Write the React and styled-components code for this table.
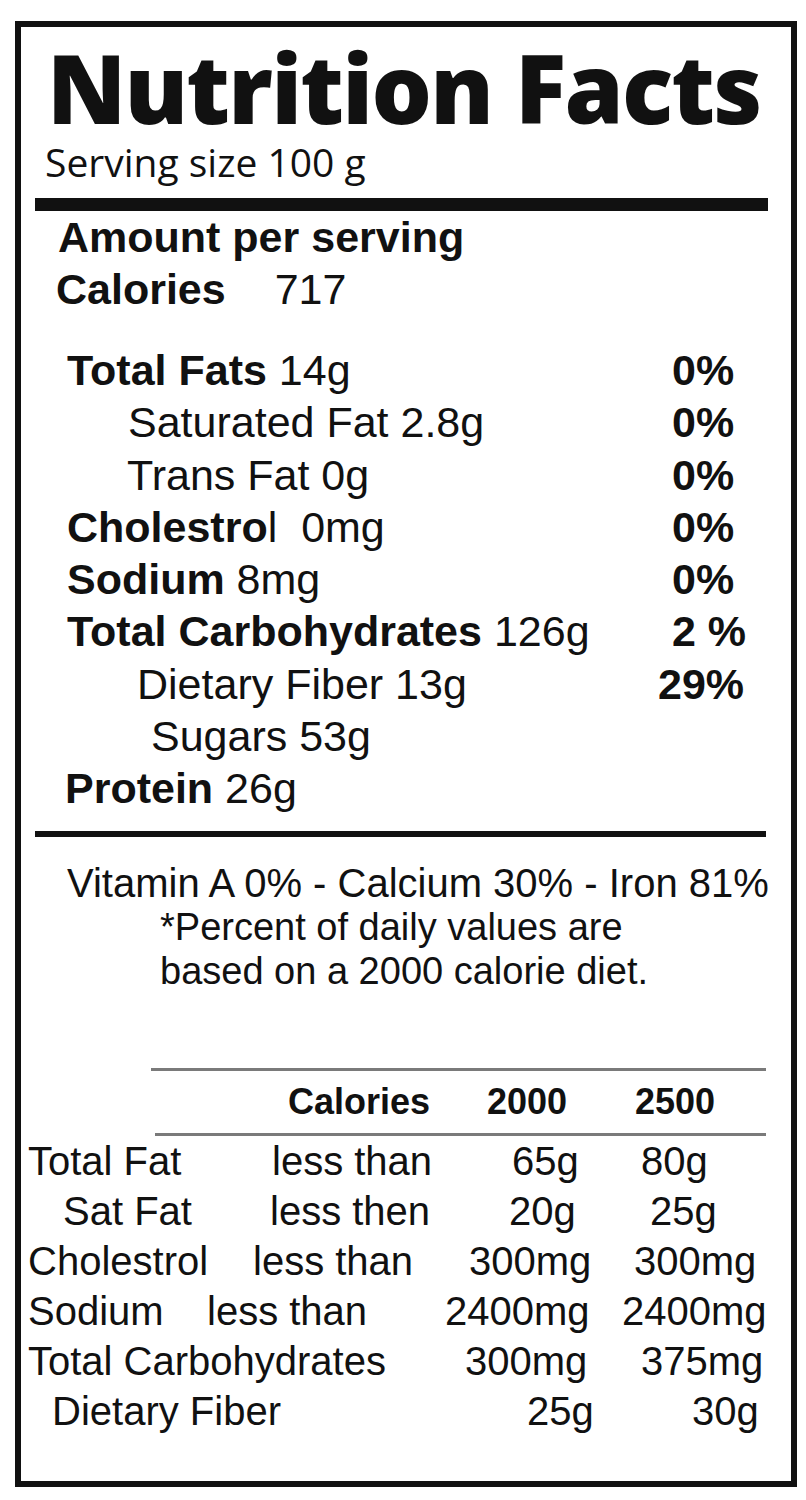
import styled, { createGlobalStyle, css } from "styled-components";

const GlobalStyle = createGlobalStyle`
  body {
    margin: 0;
    background: #ffffff;
    color: #111111;
    font-family: "Liberation Sans", Arial, sans-serif;
  }
`;

const Label = styled.div`
  box-sizing: border-box;
  width: 782px;
  height: 1466px;
  margin: 21px 0 0 15px;
  border: 6px solid #111111;
  display: flex;
  flex-direction: column;
`;

const Title = styled.h1`
  margin: 13px 0 0 26px;
  font-family: "Open Sans", sans-serif;
  font-weight: 800;
  font-size: 95px;
  line-height: 95px;
  letter-spacing: -1.75px;
`;

const Serving = styled.div`
  margin: 7px 0 0 24px;
  font-family: "Open Sans", sans-serif;
  font-size: 39px;
  line-height: 39px;
`;

const Rule = styled.div`
  height: ${(p) => p.size}px;
  margin: ${(p) => p.gap}px ${(p) => p.right}px 0 ${(p) => p.left}px;
  background: ${(p) => (p.gray ? "#7a7a7a" : "#111111")};
`;

const Line = styled.div`
  font-size: 43px;
  line-height: 52px;
  font-weight: ${(p) => (p.bold ? 700 : 400)};
  padding-left: ${(p) => p.indent}px;
  margin-top: ${(p) => p.gap || 0}px;
`;

const Kcal = styled.span`
  font-weight: 400;
  margin-left: 49px;
`;

const Nutrients = styled.div`
  margin-top: 29px;
  display: flex;
  flex-direction: column;
`;

const Nutrient = styled.div`
  display: grid;
  grid-template-columns: 1fr 119px;
  font-size: 43px;
  line-height: 52.25px;
  padding-left: ${(p) => 46 + (p.indent || 0)}px;
  b {
    font-weight: 700;
  }
`;

const Daily = styled.span`
  font-weight: 700;
  margin-left: ${(p) => p.nudge || 0}px;
`;

const Note = styled.div`
  font-size: ${(p) => p.size || 40}px;
  line-height: 44px;
  padding-left: ${(p) => p.indent}px;
  margin-top: ${(p) => p.gap || 0}px;
`;

const Table = styled.div`
  padding-left: 7px;
  display: flex;
  flex-direction: column;
`;

const TableRow = styled.div`
  display: grid;
  grid-template-columns: 172px 240px 175px 1fr;
  white-space: nowrap;
  ${(p) =>
    p.head
      ? css`
          font-size: 36px;
          line-height: 40px;
          font-weight: 700;
          margin: 11px 0;
        `
      : css`
          font-size: 40px;
          line-height: 50px;
        `}
`;

const Cell = styled.span`
  padding-left: ${(p) => p.pad || 0}px;
  ${(p) =>
    p.span &&
    css`
      grid-column: span ${p.span};
    `}
`;

const nutrients = [
  { indent: 0, bold: "Total Fats", rest: " 14g", dv: "0%" },
  { indent: 61, rest: "Saturated Fat 2.8g", dv: "0%" },
  { indent: 60, rest: "Trans Fat 0g", dv: "0%" },
  { indent: 0, bold: "Cholestro", rest: "l\u00a0 0mg", dv: "0%" },
  { indent: 0, bold: "Sodium", rest: " 8mg", dv: "0%" },
  { indent: 0, bold: "Total Carbohydrates", rest: " 126g", dv: "2 %" },
  { indent: 70, rest: "Dietary Fiber 13g", dv: "29%", nudge: -14 },
  { indent: 84, rest: "Sugars 53g" },
  { indent: -2, bold: "Protein", rest: " 26g" },
];

const limits = [
  ["Total Fat", 0, "less than", 72, "65g", 72, "80g", 26],
  ["Sat Fat", 35, "less then", 70, "20g", 69, "25g", 35],
  ["Cholestrol", 0, "less than", 53, "300mg", 29, "300mg", 19],
  ["Sodium", 0, "less than", 7, "2400mg", 5, "2400mg", 7],
];

function App() {
  return (
    <>
      <GlobalStyle />
      <Label>
        <Title>Nutrition Facts</Title>
        <Serving>Serving size 100 g</Serving>
        <Rule size={13} gap={17} left={14} right={23} />

        <Line bold indent={37}>
          Amount per serving
        </Line>
        <Line bold indent={35}>
          Calories<Kcal>717</Kcal>
        </Line>

        <Nutrients>
          {nutrients.map((n, i) => (
            <Nutrient key={i} indent={n.indent}>
              <span>
                {n.bold && <b>{n.bold}</b>}
                {n.rest}
              </span>
              {n.dv && <Daily nudge={n.nudge}>{n.dv}</Daily>}
            </Nutrient>
          ))}
        </Nutrients>

        <Rule size={6} gap={17} left={14} right={25} />

        <Note indent={46} gap={24}>
          Vitamin A 0% - Calcium 30% - Iron 81%
        </Note>
        <Note indent={139} size={38}>
          *Percent of daily values are
        </Note>
        <Note indent={139} size={38}>
          based on a 2000 calorie diet.
        </Note>

        <Rule gray size={3} gap={75} left={130} right={25} />
        <Table>
          <TableRow head>
            <span />
            <Cell pad={88}>Calories</Cell>
            <Cell pad={47}>2000</Cell>
            <Cell pad={20}>2500</Cell>
          </TableRow>
        </Table>
        <Rule gray size={3} gap={0} left={134} right={25} />

        <Table>
          {limits.map((r) => (
            <TableRow key={r[0]}>
              <Cell pad={r[1]}>{r[0]}</Cell>
              <Cell pad={r[3]}>{r[2]}</Cell>
              <Cell pad={r[5]}>{r[4]}</Cell>
              <Cell pad={r[7]}>{r[6]}</Cell>
            </TableRow>
          ))}
          <TableRow>
            <Cell span={2}>Total Carbohydrates</Cell>
            <Cell pad={25}>300mg</Cell>
            <Cell pad={26}>375mg</Cell>
          </TableRow>
          <TableRow>
            <Cell span={2} pad={24}>
              Dietary Fiber
            </Cell>
            <Cell pad={87}>25g</Cell>
            <Cell pad={77}>30g</Cell>
          </TableRow>
        </Table>
      </Label>
    </>
  );
}

export default App;
